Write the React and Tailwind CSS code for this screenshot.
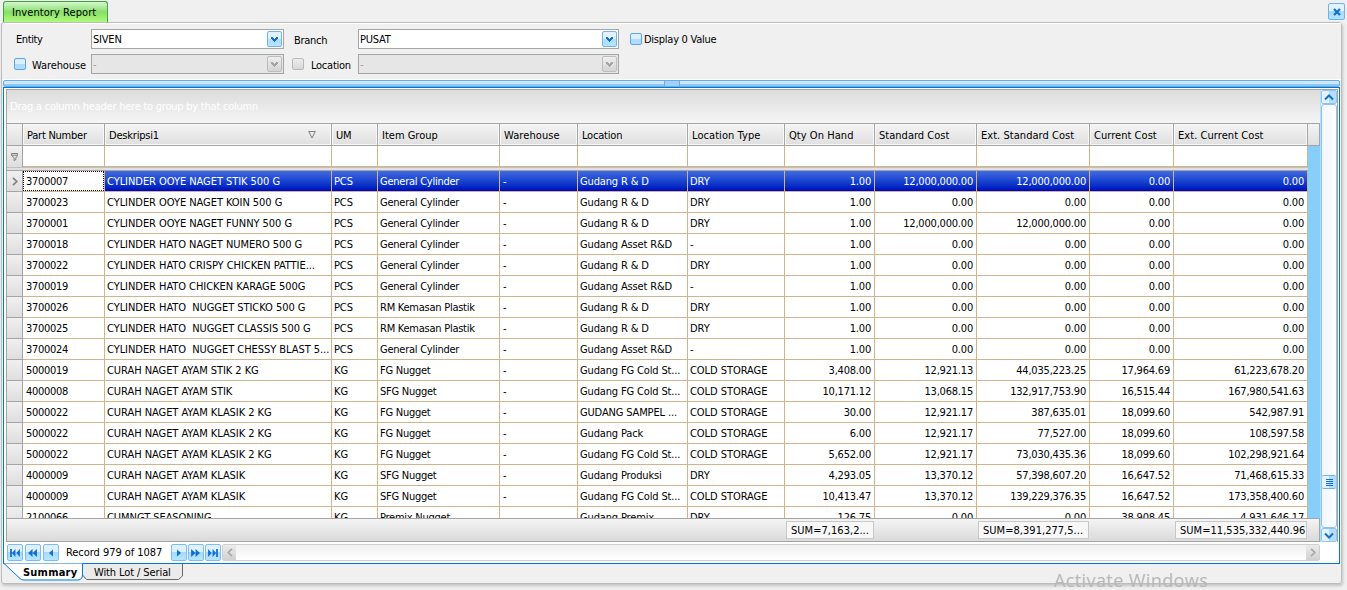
const columns = [
  { title: "Part Number", cell: "w-[82px]", head: "tracking-[-0.24px]", text: "pl-[3px] tracking-[-0.3px]" },
  { title: "Deskripsi1", cell: "w-[227px]", head: "tracking-[-0.2px]", text: "pl-[2px] tracking-[-0.05px]", sorted: true },
  { title: "UM", cell: "w-[46px]", head: "tracking-[-0.2px]", text: "pl-[2px] tracking-[-0.1px]" },
  { title: "Item Group", cell: "w-[122px]", head: "tracking-[0px]", text: "pl-[2px] tracking-[-0.25px]" },
  { title: "Warehouse", cell: "w-[78px]", head: "tracking-[0.1px]", text: "pl-[3px]" },
  { title: "Location", cell: "w-[110px]", head: "tracking-[-0.2px]", text: "pl-[2px] tracking-[-0.15px]" },
  { title: "Location Type", cell: "w-[97px]", head: "tracking-[0.07px]", text: "pl-[2px] tracking-[-0.05px]" },
  { title: "Qty On Hand", cell: "w-[90px]", head: "tracking-[0.05px]", num: true, sum: "SUM=7,163,2..." },
  { title: "Standard Cost", cell: "w-[102px]", head: "tracking-[0.02px]", num: true },
  { title: "Ext. Standard Cost", cell: "w-[113px]", head: "tracking-[0.04px]", num: true, sum: "SUM=8,391,277,5..." },
  { title: "Current Cost", cell: "w-[84px]", head: "tracking-[0.04px]", num: true },
  { title: "Ext. Current Cost", cell: "w-[134px]", head: "tracking-[0.06px]", num: true, sum: "SUM=11,535,332,440.96" },
];

const rows = [
  ["3700007", "CYLINDER OOYE NAGET STIK 500 G", "PCS", "General Cylinder", "-", "Gudang R & D", "DRY", "1.00", "12,000,000.00", "12,000,000.00", "0.00", "0.00"],
  ["3700023", "CYLINDER OOYE NAGET KOIN 500 G", "PCS", "General Cylinder", "-", "Gudang R & D", "DRY", "1.00", "0.00", "0.00", "0.00", "0.00"],
  ["3700001", "CYLINDER OOYE NAGET FUNNY 500 G", "PCS", "General Cylinder", "-", "Gudang R & D", "DRY", "1.00", "12,000,000.00", "12,000,000.00", "0.00", "0.00"],
  ["3700018", "CYLINDER HATO NAGET NUMERO 500 G", "PCS", "General Cylinder", "-", "Gudang Asset R&D", "-", "1.00", "0.00", "0.00", "0.00", "0.00"],
  ["3700022", "CYLINDER HATO CRISPY CHICKEN PATTIE...", "PCS", "General Cylinder", "-", "Gudang R & D", "DRY", "1.00", "0.00", "0.00", "0.00", "0.00"],
  ["3700019", "CYLINDER HATO CHICKEN KARAGE 500G", "PCS", "General Cylinder", "-", "Gudang Asset R&D", "-", "1.00", "0.00", "0.00", "0.00", "0.00"],
  ["3700026", "CYLINDER HATO  NUGGET STICKO 500 G", "PCS", "RM Kemasan Plastik", "-", "Gudang R & D", "DRY", "1.00", "0.00", "0.00", "0.00", "0.00"],
  ["3700025", "CYLINDER HATO  NUGGET CLASSIS 500 G", "PCS", "RM Kemasan Plastik", "-", "Gudang R & D", "DRY", "1.00", "0.00", "0.00", "0.00", "0.00"],
  ["3700024", "CYLINDER HATO  NUGGET CHESSY BLAST 5...", "PCS", "General Cylinder", "-", "Gudang Asset R&D", "-", "1.00", "0.00", "0.00", "0.00", "0.00"],
  ["5000019", "CURAH NAGET AYAM STIK 2 KG", "KG", "FG Nugget", "-", "Gudang FG Cold St...", "COLD STORAGE", "3,408.00", "12,921.13", "44,035,223.25", "17,964.69", "61,223,678.20"],
  ["4000008", "CURAH NAGET AYAM STIK", "KG", "SFG Nugget", "-", "Gudang FG Cold St...", "COLD STORAGE", "10,171.12", "13,068.15", "132,917,753.90", "16,515.44", "167,980,541.63"],
  ["5000022", "CURAH NAGET AYAM KLASIK 2 KG", "KG", "FG Nugget", "-", "GUDANG SAMPEL ...", "COLD STORAGE", "30.00", "12,921.17", "387,635.01", "18,099.60", "542,987.91"],
  ["5000022", "CURAH NAGET AYAM KLASIK 2 KG", "KG", "FG Nugget", "-", "Gudang Pack", "COLD STORAGE", "6.00", "12,921.17", "77,527.00", "18,099.60", "108,597.58"],
  ["5000022", "CURAH NAGET AYAM KLASIK 2 KG", "KG", "FG Nugget", "-", "Gudang FG Cold St...", "COLD STORAGE", "5,652.00", "12,921.17", "73,030,435.36", "18,099.60", "102,298,921.64"],
  ["4000009", "CURAH NAGET AYAM KLASIK", "KG", "SFG Nugget", "-", "Gudang Produksi", "DRY", "4,293.05", "13,370.12", "57,398,607.20", "16,647.52", "71,468,615.33"],
  ["4000009", "CURAH NAGET AYAM KLASIK", "KG", "SFG Nugget", "-", "Gudang FG Cold St...", "COLD STORAGE", "10,413.47", "13,370.12", "139,229,376.35", "16,647.52", "173,358,400.60"],
  ["2100066", "CUMNGT SEASONING", "KG", "Premix Nugget", "-", "Gudang Premix", "DRY", "126.75", "0.00", "0.00", "38,908.45", "4,931,646.17"],
];

function DropButton({ disabled }) {
  return (
    <span
      className={
        disabled
          ? "flex h-4 w-[15px] items-center justify-center rounded-[2px] border border-[#bdbdbd] bg-linear-to-b from-[#eeeeee] to-[#d4d4d4] text-[#a3a3a3]"
          : "flex h-4 w-[15px] items-center justify-center rounded-[2px] border border-[#6db4f0] bg-linear-to-b from-[#e3f2ff] from-50% via-[#b4dcff] via-50% to-[#b4e4ff] text-[#1170cf]"
      }
    >
      <svg width="7" height="5" viewBox="0 0 7 5" fill="currentColor" shapeRendering="crispEdges">
        <path d="M0 0h2v1h1v1h1V1h1V0h2v2h-1v1h-1v1h-1v1h-1v-1h-1v-1h-1v-1h-1z" />
      </svg>
    </span>
  );
}

function Combo({ value, width, disabled }) {
  return (
    <div
      className={`${width} flex h-5 items-center justify-between border border-[#a5a5a5] pr-px pl-px tracking-[-0.2px] ${
        disabled ? "bg-[#e6e6e6] text-[#a0a0a0]" : "bg-white text-black"
      }`}
    >
      <span className="pt-[2px]">{value}</span>
      <DropButton disabled={disabled} />
    </div>
  );
}

function Check({ disabled }) {
  return (
    <span
      className={
        disabled
          ? "block size-3 shrink-0 rounded-[2px] border border-[#b9b9b9] bg-linear-to-b from-[#ececec] to-[#d8d8d8]"
          : "block size-3 shrink-0 rounded-[2px] border border-[#5aa6e6] bg-linear-to-b from-[#dceeff] from-50% to-[#b0dcff] to-50%"
      }
    />
  );
}

const glyphs = {
  first: "M0 0h2v9h-2z M6 0v9L2 4.5z M11 0v9L7 4.5z",
  prevPage: "M5 0v9L0 4.5z M10 0v9L5 4.5z",
  prev: "M5 0v9L0 4.5z",
  next: "M0 0v9L5 4.5z",
  nextPage: "M0 0v9L5 4.5z M5 0v9L10 4.5z",
  last: "M0 0v9L4 4.5z M5 0v9L9 4.5z M9 0h2v9h-2z",
};

function NavButton({ name }) {
  const single = name === "prev" || name === "next";
  return (
    <span className="flex h-[17px] w-4 items-center justify-center rounded-[2px] border border-[#7dbcf2] bg-linear-to-b from-[#dff0ff] from-50% via-[#a9d8ff] via-50% to-[#b4e8ff]">
      <svg width={single ? 4 : 10} height="8" viewBox={single ? "0 0 5 9" : "0 0 11 9"} fill="#1170cf">
        <path d={glyphs[name]} />
      </svg>
    </span>
  );
}

function HeaderCell({ col }) {
  return (
    <div className={`${col.cell} h-full shrink-0 border-r border-[#a5a5a5] bg-linear-to-b from-[#f4f4f4] to-[#dfdfdf]`}>
      <div className="flex h-full items-center justify-between border border-[#f8f8f8] pr-[14px] pl-[3px] whitespace-nowrap">
        <span className={`pt-[2px] ${col.head}`}>{col.title}</span>
        {col.sorted && (
          <svg width="8" height="8" viewBox="0 0 8 8" fill="none" stroke="#7d7d7d">
            <path d="M.7.5h6.6L4 7z" />
          </svg>
        )}
      </div>
    </div>
  );
}

function Row({ row, selected }) {
  return (
    <div className="flex h-[21px] shrink-0">
      <div className="flex w-4 shrink-0 items-center justify-center border-r border-b border-[#a5a5a5] bg-linear-to-b from-[#f0f0f0] to-[#dedede]">
        {selected && (
          <svg width="6" height="9" viewBox="0 0 6 9" fill="none" stroke="#808080" strokeWidth="1.7">
            <path d="M1 .8l3.8 3.7L1 8.2" />
          </svg>
        )}
      </div>
      {columns.map((col, i) => {
        const focused = selected && i === 0;
        const fill = selected && !focused ? "bg-linear-to-b from-[#4169e1] to-[#0000bd] text-white" : "bg-white";
        return (
          <div key={col.title} className={`${col.cell} shrink-0 border-r border-b border-[#d2b48c] whitespace-pre ${fill}`}>
            {focused ? (
              <div className="h-full border border-dotted border-black pl-[2px] leading-[19px] tracking-[-0.3px]">{row[i]}</div>
            ) : (
              <div className={`h-full overflow-hidden pt-px leading-[19px] ${col.num ? "pr-[3px] text-right tracking-[-0.2px]" : col.text}`}>
                {row[i]}
              </div>
            )}
          </div>
        );
      })}
    </div>
  );
}

function ScrollArrow({ up }) {
  return (
    <span className="flex h-[14px] w-4 items-center justify-center rounded-[2px] border border-[#8cc4f4] bg-linear-to-r from-[#e4f3ff] from-50% to-[#b4deff] to-50%">
      <svg width="10" height="7" viewBox="0 0 10 7" fill="none" stroke="#1170cf" strokeWidth="2">
        <path d={up ? "M1 5.5l4-4 4 4" : "M1 1.5l4 4 4-4"} />
      </svg>
    </span>
  );
}

function Grid() {
  return (
    <div className="flex h-[453px] border border-[#a5a5a5] border-b-0 bg-white">
      <div className="flex w-[1313px] shrink-0 flex-col">
        <div className="flex h-[33px] shrink-0 items-center bg-linear-to-b from-[#dcdcdc] to-[#f5f5f5] pt-px pl-[3px] text-white">
          <span className="tracking-[-0.23px]">Drag a column header here to group by that column</span>
        </div>
        <div className="flex h-[23px] shrink-0 border-y border-[#a5a5a5]">
          <div className="w-4 shrink-0 border-r border-[#a5a5a5] bg-linear-to-b from-[#f4f4f4] to-[#dfdfdf]" />
          {columns.map((col) => (
            <HeaderCell key={col.title} col={col} />
          ))}
          <div className="w-3 shrink-0 border-r border-[#a5a5a5] bg-linear-to-b from-[#f4f4f4] to-[#dfdfdf]" />
        </div>
        <div className="flex h-[372px] shrink-0 overflow-hidden">
          <div className="w-[1301px]">
            <div className="flex h-[21px]">
              <div className="flex w-4 shrink-0 items-center justify-center border-r border-[#a5a5a5] bg-linear-to-b from-[#f0f0f0] to-[#dedede]">
                <svg width="7" height="8" viewBox="0 0 8 9" fill="none" stroke="#6f6f6f">
                  <path d="M.5.5h7v2h-7z M1 3l2.500 2.500v3l2-1V5.500L7.500 3" />
                </svg>
              </div>
              {columns.map((col) => (
                <div key={col.title} className={`${col.cell} shrink-0 border-r border-b border-[#d2b48c] bg-white`} />
              ))}
            </div>
            <div className="h-1 border-t border-b border-t-[#c0c0c0] border-b-[#a5a5a5] bg-[#e0e0e0]" />
            {rows.map((row, i) => (
              <Row key={i} row={row} selected={i === 0} />
            ))}
          </div>
          <div className="w-3 bg-[#87cefa]" />
        </div>
        <div className="flex h-6 shrink-0 border-y border-r border-[#a5a5a5] bg-linear-to-b from-[#f4f4f4] to-[#dadada] pl-4">
          {columns.map((col) => (
            <div key={col.title} className={`${col.cell} shrink-0 py-[2px] pr-px pl-px`}>
              {col.sum && (
                <div className="h-[18px] border border-[#c8c8c8] bg-[#f7f7f7] pl-1 leading-[18px] tracking-[0.03px] whitespace-nowrap">{col.sum}</div>
              )}
            </div>
          ))}
        </div>
      </div>
      <div className="flex w-[17px] shrink-0 flex-col items-center border-l border-[#b8dcf8] bg-white">
        <ScrollArrow up />
        <div className="flex w-4 flex-1 flex-col rounded-[3px] border border-[#8cc4f4] bg-linear-to-r from-[#eef6fd] to-white">
          <div className="flex-1" />
          <div className="flex h-[14px] flex-col items-center justify-center gap-px rounded-[2px] border-y border-[#6db4f0] bg-linear-to-r from-[#e4f3ff] from-50% to-[#b4deff] to-50%">
            <span className="h-px w-[7px] bg-[#1170cf]" />
            <span className="h-px w-[7px] bg-[#1170cf]" />
            <span className="h-px w-[7px] bg-[#1170cf]" />
            <span className="h-px w-[7px] bg-[#1170cf]" />
          </div>
          <div className="h-[38px]" />
        </div>
        <ScrollArrow />
      </div>
    </div>
  );
}

function Navigator() {
  return (
    <div className="flex h-[21px] items-center bg-white pl-px">
      <div className="flex gap-[2px]">
        <NavButton name="first" />
        <NavButton name="prevPage" />
        <NavButton name="prev" />
      </div>
      <span className="w-[112px] pl-[7px] tracking-[-0.05px] whitespace-nowrap">Record 979 of 1087</span>
      <div className="flex gap-px">
        <NavButton name="next" />
        <NavButton name="nextPage" />
        <NavButton name="last" />
      </div>
      <div className="ml-px flex h-[17px] w-[1098px] justify-between rounded-[2px] border border-[#d0d0d0] bg-linear-to-b from-[#f0f0f0] to-white">
        <span className="flex w-[13px] items-center justify-center bg-linear-to-b from-[#ececec] to-[#d0d0d0]">
          <svg width="6" height="9" viewBox="0 0 6 9" fill="none" stroke="#a8a8a8" strokeWidth="1.7">
            <path d="M5 .8L1.200 4.500 5 8.200" />
          </svg>
        </span>
        <span className="flex w-[13px] items-center justify-center bg-linear-to-b from-[#ececec] to-[#d0d0d0]">
          <svg width="6" height="9" viewBox="0 0 6 9" fill="none" stroke="#a8a8a8" strokeWidth="1.7">
            <path d="M1 .8l3.800 3.700L1 8.200" />
          </svg>
        </span>
      </div>
    </div>
  );
}

function BottomTabs() {
  return (
    <div className="relative -mt-px flex h-[18px]">
      <svg className="absolute top-0 left-0" width="182" height="18" viewBox="0 0 182 18" fill="none">
        <path d="M79.500 1v11l4 4.500h92l4-3.500V1" fill="#ebebeb" stroke="#6a6a6a" />
        <path d="M1 .5L17 15.500q1.500 1.500 4 1.500H75q4.500-.5 4.500-5V.5" fill="#fff" stroke="#0078d7" />
      </svg>
      <span className="relative w-[82px] pl-[20px] leading-[19px] font-bold tracking-[0.22px]">Summary</span>
      <span className="relative pl-[9px] leading-[19px] tracking-[-0.1px]">With Lot / Serial</span>
    </div>
  );
}

export default function App() {
  return (
    <div className="relative h-[590px] w-[1347px] overflow-hidden bg-[#f0f0f0] font-['DejaVu_Sans_Condensed','DejaVu_Sans',sans-serif] text-[11px] leading-[14px] text-black font-stretch-condensed">
      <div className="flex h-[22px] items-start justify-between pr-[2px] pl-[3px]">
        <div className="mt-px h-[21px] w-[105px] rounded-t-[3px] border border-b-0 border-[#3fa53f] bg-linear-to-b from-[#d5f5cd] via-[#86df68] via-50% to-[#b0fa7c] pl-2 leading-[21px] tracking-[0.07px]">
          Inventory Report
        </div>
        <div className="mt-[3px] flex size-[17px] items-center justify-center rounded-[2px] border border-[#6db4f0] bg-linear-to-b from-[#e3f2ff] from-50% via-[#a9d8ff] via-50% to-[#b4e4ff]">
          <svg width="8" height="8" viewBox="0 0 8 8" stroke="#1170cf" strokeWidth="2.200">
            <path d="M1 1l6 6M7 1L1 7" />
          </svg>
        </div>
      </div>

      <div className="ml-px h-[562px] w-[1341px] rounded-[3px] border border-[#bcbcbc] pl-px shadow-[1px_2px_3px_#c4c4c4]">
        <div className="h-[56px] border-t border-white pt-[5px]">
          <div className="flex h-5 items-center">
            <span className="w-[88px] pt-[2px] pl-[13px] tracking-[-0.4px]">Entity</span>
            <Combo value="SIVEN" width="w-[193px]" />
            <span className="w-[74px] pt-[3px] pl-[10px] tracking-[-0.3px]">Branch</span>
            <Combo value="PUSAT" width="w-[261px]" />
            <div className="flex items-center gap-[2px] pl-[11px]">
              <Check />
              <span className="pt-[2px] tracking-[-0.25px]">Display 0 Value</span>
            </div>
          </div>
          <div className="mt-[5px] flex h-5 items-center">
            <div className="flex w-[88px] items-center gap-[6px] pl-[11px] tracking-[-0.1px]">
              <Check />
              <span className="pt-[3px]">Warehouse</span>
            </div>
            <Combo value="-" width="w-[193px]" disabled />
            <div className="flex w-[74px] items-center gap-[7px] pl-[8px] tracking-[-0.25px]">
              <Check disabled />
              <span className="pt-[3px]">Location</span>
            </div>
            <Combo value="-" width="w-[261px]" disabled />
          </div>
        </div>

        <div className="flex h-[8px] w-[1338px] border-t border-white">
          <div className="flex h-[7px] w-[1337px] justify-center rounded-[2px] border border-[#66aeeb] bg-linear-to-b from-[#cfe7fd] from-50% to-[#8fc9fa] to-50%">
            <div className="h-full w-4 border-x border-[#66aeeb] bg-[#a5d0f8]" />
          </div>
        </div>

        <div className="h-[477px] w-[1337px] border border-[#0078d7] bg-white">
          <div className="pt-px pr-px pl-[2px]">
            <Grid />
            <Navigator />
          </div>
        </div>
        <BottomTabs />
      </div>

      <div className="absolute top-[568px] left-[1054px] font-['Open_Sans',sans-serif] text-[18px] leading-[24px] tracking-[0.4px] whitespace-nowrap text-[#b7b7b7] font-stretch-normal">
        Activate Windows
      </div>
    </div>
  );
}
